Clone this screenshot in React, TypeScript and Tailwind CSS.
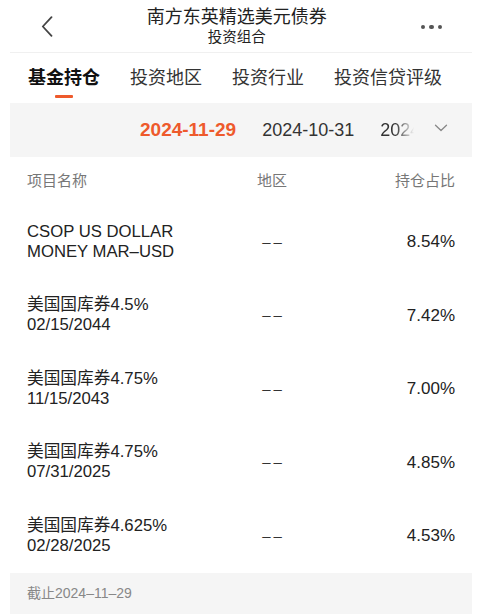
import React from "react";

const rows = [
  { name: ["CSOP US DOLLAR", "MONEY MAR–USD"], pct: "8.54%" },
  { name: ["美国国库券4.5%", "02/15/2044"], pct: "7.42%" },
  { name: ["美国国库券4.75%", "11/15/2043"], pct: "7.00%" },
  { name: ["美国国库券4.75%", "07/31/2025"], pct: "4.85%" },
  { name: ["美国国库券4.625%", "02/28/2025"], pct: "4.53%" },
];

const font = { fontFamily: '"Liberation Sans", "Noto Sans CJK SC", sans-serif' };

export default function App() {
  return (
    <div className="w-[486px] h-[615px] bg-white overflow-hidden" style={font}>
      <div className="ml-[10px] w-[462px] overflow-hidden">
        {/* Header */}
        <div className="h-[53px] border-b border-[#f0f0f0] flex items-center justify-between px-[30px]">
          <svg width="12" height="21" viewBox="0 0 12 21" className="ml-[1px]">
            <path d="M10.5 1.2 L1.8 10.5 L10.5 19.8" fill="none" stroke="#444" strokeWidth="1.8" strokeLinecap="round" strokeLinejoin="round" />
          </svg>
          <div className="flex flex-col items-center -mt-[1px]">
            <div className="text-[18px] leading-[22px] text-[#222]">南方东英精选美元债券</div>
            <div className="text-[14.5px] leading-[18px] text-[#222]">投资组合</div>
          </div>
          <div className="flex gap-[4px] items-center mt-[2px]">
            <span className="w-[4.5px] h-[4.5px] rounded-full bg-[#555]" />
            <span className="w-[4.5px] h-[4.5px] rounded-full bg-[#555]" />
            <span className="w-[4.5px] h-[4.5px] rounded-full bg-[#555]" />
          </div>
        </div>
        {/* Tabs */}
        <div className="h-[50px] flex items-start gap-[30px] pl-[18px] pt-[13px] whitespace-nowrap text-[18px] leading-[24px] overflow-hidden">
          <div className="flex flex-col items-center shrink-0">
            <span className="font-bold text-[#111]">基金持仓</span>
            <span className="mt-[5px] w-[18px] h-[3px] bg-[#ee5a2c] rounded-[1px]" />
          </div>
          <span className="text-[#333] shrink-0">投资地区</span>
          <span className="text-[#333] shrink-0">投资行业</span>
          <span className="text-[#333] shrink-0">投资信贷评级</span>
          <span className="text-[#333] shrink-0 w-[2px] overflow-hidden opacity-40">投</span>
        </div>
        {/* Dates */}
        <div className="h-[54px] bg-[#f5f5f5] flex items-center pl-[130px] whitespace-nowrap">
          <span className="text-[19px] font-bold text-[#ee5a2c]">2024-11-29</span>
          <span className="ml-[26px] text-[18px] text-[#333]">2024-10-31</span>
          <span className="ml-[26px] text-[18px] text-[#333] w-[34px] overflow-hidden [mask-image:linear-gradient(to_right,black_45%,transparent)]">2024</span>
          <svg width="14" height="8" viewBox="0 0 14 8" className="ml-[20px] mt-[-4px]">
            <path d="M1.5 1.2 L7 6.5 L12.5 1.2" fill="none" stroke="#888" strokeWidth="1.3" strokeLinecap="round" strokeLinejoin="round" />
          </svg>
        </div>
        {/* Table header */}
        <div className="h-[48px] flex items-center px-[17px] text-[15px] text-[#777]">
          <span className="w-[200px]">项目名称</span>
          <span className="w-[90px] text-center">地区</span>
          <span className="flex-1 text-right">持仓占比</span>
        </div>
        {/* Rows */}
        {rows.map((r) => (
          <div key={r.pct} className="h-[73.5px] flex items-center px-[17px] text-[#222]">
            <div className="w-[200px] text-[16.7px] leading-[20px]">
              <div>{r.name[0]}</div>
              <div>{r.name[1]}</div>
            </div>
            <span className="w-[90px] text-center text-[15px] tracking-[3px] pl-[3px] text-[#333]">––</span>
            <span className="flex-1 text-right text-[17px]">{r.pct}</span>
          </div>
        ))}
        {/* Footer */}
        <div className="h-[41.5px] bg-[#f5f5f5] flex items-center px-[17px] text-[14px] text-[#888]">
          截止2024–11–29
        </div>
      </div>
    </div>
  );
}
